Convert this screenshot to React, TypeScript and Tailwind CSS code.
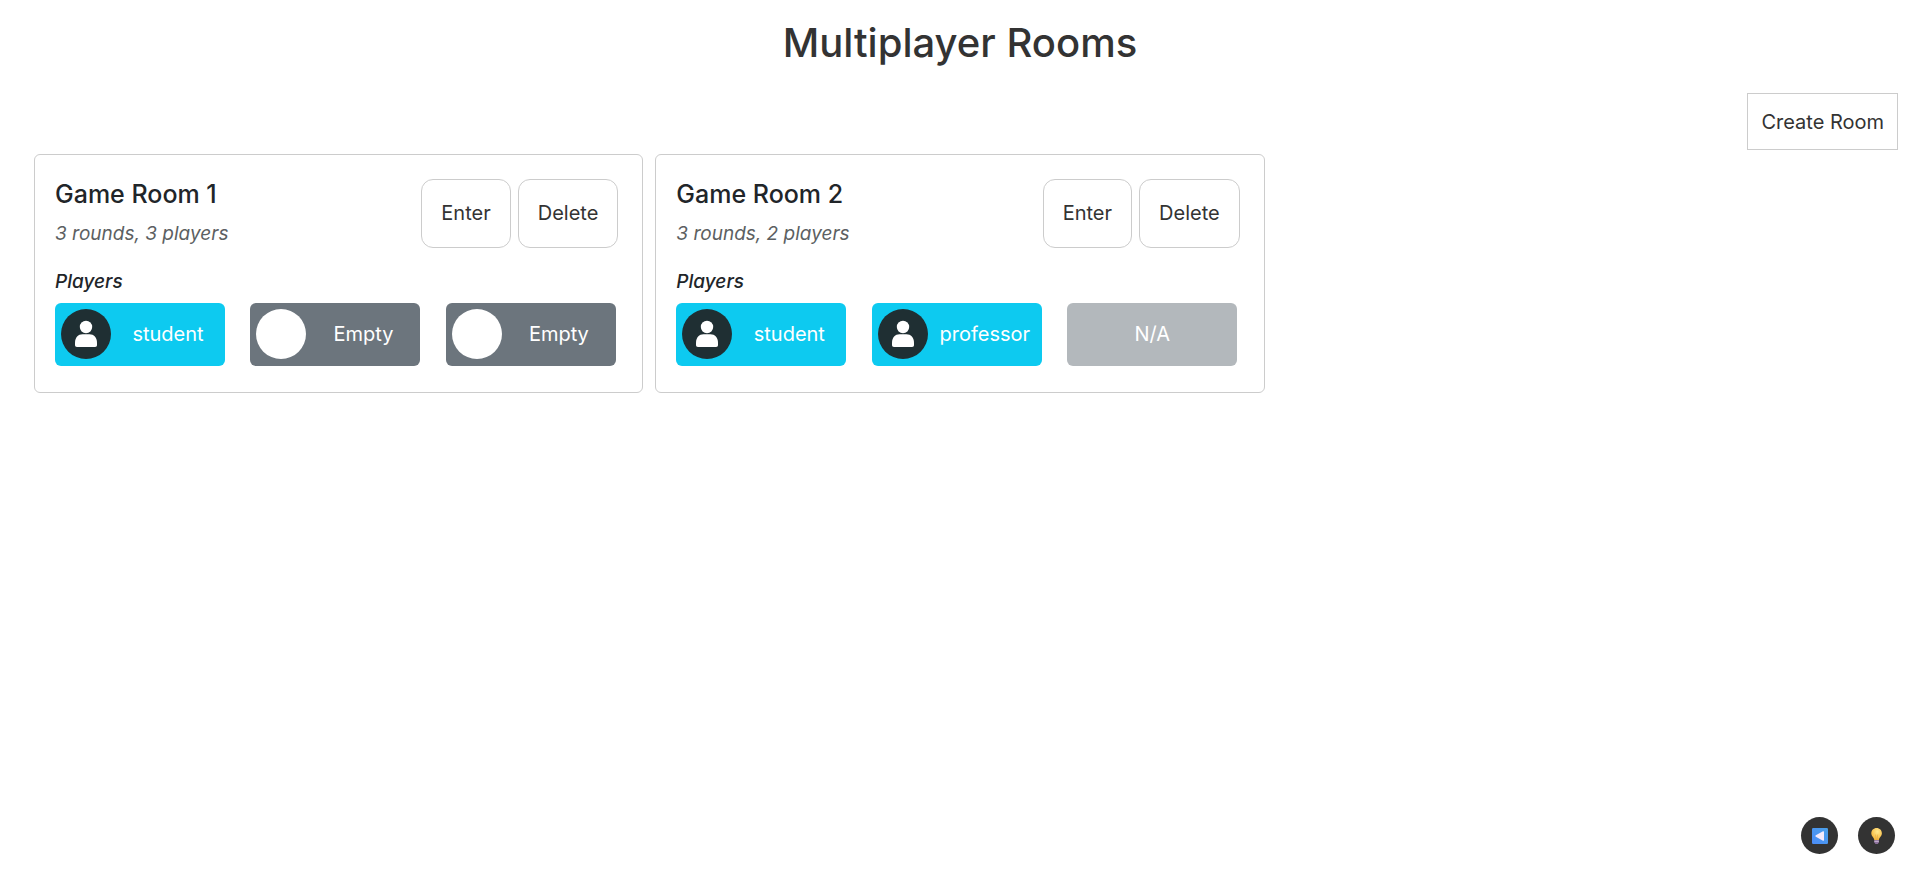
type Slot = { kind: 'player' | 'empty' | 'na'; name: string };
type Room = { name: string; rounds: number; slots: Slot[] };

const rooms: Room[] = [
  {
    name: 'Game Room 1',
    rounds: 3,
    slots: [
      { kind: 'player', name: 'student' },
      { kind: 'empty', name: 'Empty' },
      { kind: 'empty', name: 'Empty' },
    ],
  },
  {
    name: 'Game Room 2',
    rounds: 3,
    slots: [
      { kind: 'player', name: 'student' },
      { kind: 'player', name: 'professor' },
      { kind: 'na', name: 'N/A' },
    ],
  },
];

function Avatar() {
  return (
    <svg viewBox="0 0 50 50" className="size-[50px] shrink-0" aria-hidden="true">
      <circle cx="25" cy="25" r="25" fill="#1f2f33" />
      <circle cx="25" cy="18" r="6.2" fill="#fff" />
      <path d="M14 36v-2.500c0-5 3.200-8.300 7.500-8.300h7c4.300 0 7.500 3.300 7.500 8.300V36c0 1.300-.7 2-2 2H16c-1.300 0-2-.7-2-2z" fill="#fff" />
    </svg>
  );
}

function PlayerSlot({ slot }: { slot: Slot }) {
  if (slot.kind === 'na') {
    return (
      <li className="flex h-[63px] w-[170px] items-center justify-center rounded-md bg-[#b3b8bc] pb-0.5 text-white">
        {slot.name}
      </li>
    );
  }
  const color = slot.kind === 'player' ? 'bg-[#0dcaf0]' : 'bg-[#6c757d]';
  return (
    <li className={`flex h-[63px] w-[170px] items-center rounded-md px-1.5 pb-0.5 text-white ${color}`}>
      {slot.kind === 'player' ? <Avatar /> : <span className="size-[50px] shrink-0 rounded-full bg-white" />}
      <span className="flex-1 pl-1.5 text-center">{slot.name}</span>
    </li>
  );
}

function RoomCard({ room }: { room: Room }) {
  const capacity = room.slots.filter((slot) => slot.kind !== 'na').length;
  const button = 'h-[69px] rounded-xl border border-[#ccc] px-[19px] pb-0.5 text-[#333]';
  return (
    <article className="rounded-md border border-[#ccc] pt-6 pb-[26px] pl-5">
      <div className="flex items-start justify-between pr-6">
        <div>
          <h2 className="text-[25px] leading-[30px] font-medium">{room.name}</h2>
          <p className="mt-2.5 text-[19px] leading-[30px] text-[#5c5f62] italic">
            {room.rounds} rounds, {capacity} players
          </p>
        </div>
        <div className="flex gap-[7px]">
          <button type="button" className={button}>Enter</button>
          <button type="button" className={button}>Delete</button>
        </div>
      </div>
      <h3 className="mt-5 text-[19px] leading-[26px] font-medium italic">Players</h3>
      <ul className="mt-2 grid grid-cols-3 pr-px">
        {room.slots.map((slot, index) => (
          <PlayerSlot key={index} slot={slot} />
        ))}
      </ul>
    </article>
  );
}

function BackIcon() {
  return (
    <svg viewBox="0 0 16 16" className="size-4" aria-hidden="true">
      <defs>
        <linearGradient id="back" x1="1" y1="0" x2="0" y2="1">
          <stop offset="0" stopColor="#4ba0e8" />
          <stop offset="1" stopColor="#4b8cf8" />
        </linearGradient>
      </defs>
      <rect width="16" height="16" rx="1.200" fill="url(#back)" />
      <path d="M3.800 7.300 11 3.300q1-.5 1 .6v8.200q0 1.100-1 .6L3.800 8.700q-1-.7 0-1.400z" fill="#f6ebfc" />
    </svg>
  );
}

function BulbIcon() {
  return (
    <svg viewBox="0 0 16 16" className="size-4" aria-hidden="true">
      <defs>
        <radialGradient id="bulb" cx=".58" cy=".3" r=".75">
          <stop offset="0" stopColor="#ffe88e" />
          <stop offset="1" stopColor="#f5b133" />
        </radialGradient>
      </defs>
      <path d="M7.600 0C4.500 0 2.300 2.300 2.300 5.200c0 3 2.700 4 3.100 7h4.400c.4-3 3.100-4 3.100-7C12.900 2.300 10.700 0 7.600 0z" fill="url(#bulb)" />
      <path d="M6.500 6.500 7.100 12h1l.6-5.500" fill="none" stroke="#e0a03a" strokeWidth=".5" />
      <path d="M5.300 12h4.600v2.200L8.800 16H6.400l-1.100-1.800z" fill="#8a7099" />
      <path d="M5.300 13.300h4.600" stroke="#d6c2e0" strokeWidth=".9" />
    </svg>
  );
}

export default function App() {
  const round = 'flex size-[37px] items-center justify-center rounded-full bg-[#333]';
  return (
    <div className="flex min-h-screen flex-col bg-white font-['Inter',sans-serif] text-xl leading-[30px] text-[#212529]">
      <h1 className="pt-[18px] text-center text-[40px] leading-[50px] font-medium text-[#333]">Multiplayer Rooms</h1>
      <div className="mt-[25px] flex justify-end pr-[22px]">
        <button type="button" className="h-[57px] border border-[#ccc] px-[13px] text-[#333]">Create Room</button>
      </div>
      <main className="mt-1 grid grid-cols-3 gap-3 px-[34px]">
        {rooms.map((room) => (
          <RoomCard key={room.name} room={room} />
        ))}
      </main>
      <footer className="mt-auto flex justify-end gap-5 pr-[25px] pb-6">
        <button type="button" aria-label="Back" className={round}><BackIcon /></button>
        <button type="button" aria-label="Hint" className={round}><BulbIcon /></button>
      </footer>
    </div>
  );
}
